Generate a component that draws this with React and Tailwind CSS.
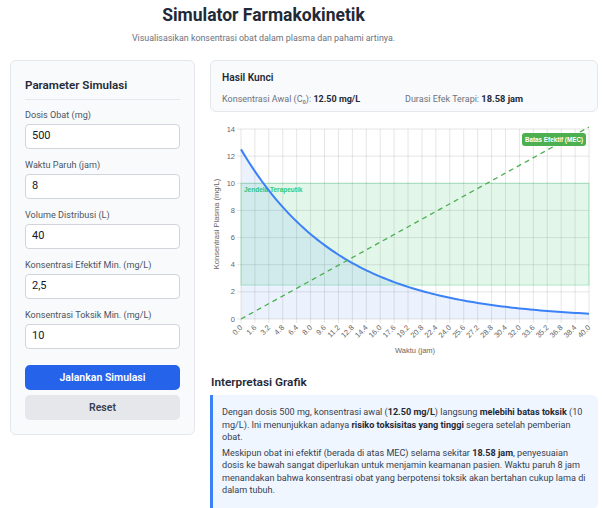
import React from "react";

const PL = 31, PR = 379, PT = 11, PB = 201;
const xs = (t) => PL + (t * (PR - PL)) / 40;
const ys = (c) => PB - (c * (PB - PT)) / 14;

function Chart() {
  const k = Math.log(2) / 8;
  const pts = [];
  for (let i = 0; i <= 100; i++) {
    const t = i * 0.4;
    pts.push([xs(t), ys(12.5 * Math.exp(-k * t))]);
  }
  const line = pts.map((p, i) => (i ? "L" : "M") + p[0].toFixed(2) + " " + p[1].toFixed(2)).join(" ");
  const fill = line + ` L${PR} ${PB} L${PL} ${PB} Z`;
  const xticks = [];
  for (let i = 0; i <= 25; i++) xticks.push(i * 1.6);
  const yticks = [0, 2, 4, 6, 8, 10, 12, 14];
  return (
    <svg width="388" height="244" viewBox="0 0 388 244" style={{ fontFamily: "'Liberation Sans', Arial, sans-serif" }}>
      {xticks.map((t, i) => (
        <line key={"vx" + i} x1={xs(t)} x2={xs(t)} y1={PT} y2={PB + 4} stroke="rgba(0,0,0,0.1)" strokeWidth="1" />
      ))}
      {yticks.map((v, i) => (
        <line key={"hy" + i} x1={PL - 4} x2={PR} y1={ys(v)} y2={ys(v)} stroke="rgba(0,0,0,0.1)" strokeWidth="1" />
      ))}
      <rect x={PL} y={ys(10)} width={PR - PL} height={ys(2.5) - ys(10)} fill="rgba(34,197,94,0.13)" stroke="rgba(34,197,94,0.3)" strokeWidth="1" />
      <text x={PL + 3} y={ys(10) + 9} fontSize="6.5" fontWeight="700" fill="rgb(52,200,105)">Jendela Terapeutik</text>
      <path d={fill} fill="rgba(59,130,246,0.1)" />
      <path d={line} fill="none" stroke="rgb(59,130,246)" strokeWidth="2" />
      <line x1={PL} y1={PB} x2={PR} y2={PT - 2} stroke="rgb(76,175,80)" strokeWidth="1.3" strokeDasharray="5 4" />
      <rect x="312" y="15" width="64" height="13" rx="3" fill="rgb(76,175,80)" />
      <text x="344" y="24.2" fontSize="6.3" fontWeight="700" fill="#fff" textAnchor="middle">Batas Efektif (MEC)</text>
      {yticks.map((v, i) => (
        <text key={"yt" + i} x={PL - 6} y={ys(v) + 2.5} fontSize="7.5" fill="#666" textAnchor="end">{v}</text>
      ))}
      {xticks.map((t, i) => (
        <text key={"xt" + i} x={xs(t) + 2} y={PB + 9} fontSize="7.5" fill="#666" textAnchor="end" transform={`rotate(-45 ${xs(t) + 2} ${PB + 9})`}>{t.toFixed(1)}</text>
      ))}
      <text x="0" y="0" fontSize="7.5" fill="#666" textAnchor="middle" transform={`translate(9 ${(PT + PB) / 2}) rotate(-90)`}>Konsentrasi Plasma (mg/L)</text>
      <text x={(PL + PR) / 2} y="235" fontSize="7.5" fill="#666" textAnchor="middle">Waktu (jam)</text>
    </svg>
  );
}

function Field({ label, value }) {
  return (
    <div className="flex flex-col gap-[3px]">
      <label className="text-[9.1px] leading-[12px] text-[#4b5563]">{label}</label>
      <div className="h-[25px] bg-white border border-[#d1d5db] rounded-[4px] px-[6px] flex items-center text-[11px] text-[#111827]">{value}</div>
    </div>
  );
}

export default function App() {
  return (
    <div className="bg-white w-[602px] min-h-[508px]" style={{ fontFamily: "Roboto, 'Noto Sans', sans-serif" }}>
      <div className="w-[527px] text-center pt-[4px]">
        <h1 className="text-[17.5px] leading-[22px] font-bold text-[#1f2937]">Simulator Farmakokinetik</h1>
        <p className="mt-[6px] text-[8.9px] leading-[12px] text-[#6b7280]">Visualisasikan konsentrasi obat dalam plasma dan pahami artinya.</p>
      </div>
      <div className="grid grid-cols-[185px_388px] gap-[15px] pl-[10px] mt-[16px]">
        <div className="self-start bg-[#f9fafb] border border-[#e5e7eb] rounded-[6px] px-[14px] pt-[16px] pb-[14px]">
          <h2 className="text-[11.6px] leading-[16px] font-semibold text-[#1f2937] pb-[6px] border-b border-[#e5e7eb]">Parameter Simulasi</h2>
          <div className="mt-[9px] flex flex-col gap-[10px]">
            <Field label="Dosis Obat (mg)" value="500" />
            <Field label="Waktu Paruh (jam)" value="8" />
            <Field label="Volume Distribusi (L)" value="40" />
            <Field label="Konsentrasi Efektif Min. (mg/L)" value="2,5" />
            <Field label="Konsentrasi Toksik Min. (mg/L)" value="10" />
          </div>
          <div className="mt-[16px] flex flex-col gap-[5px]">
            <button className="h-[25px] rounded-[5px] bg-[#2563eb] text-white text-[10.5px] font-semibold">Jalankan Simulasi</button>
            <button className="h-[25px] rounded-[5px] bg-[#e5e7eb] text-[#374151] text-[10.5px] font-semibold">Reset</button>
          </div>
        </div>
        <div className="flex flex-col">
          <div className="bg-[#f9fafb] border border-[#e5e7eb] rounded-[6px] h-[52px] px-[11px] pt-[10px]">
            <h3 className="text-[10.2px] leading-[14px] font-semibold text-[#1f2937]">Hasil Kunci</h3>
            <div className="mt-[8px] grid grid-cols-2 text-[9px] leading-[12px] text-[#6b7280]">
              <div>Konsentrasi Awal (C₀): <span className="font-bold text-[#1f2937]">12.50 mg/L</span></div>
              <div className="pl-[1px]">Durasi Efek Terapi: <span className="font-bold text-[#1f2937] text-[9.3px]">18.58 jam</span></div>
            </div>
          </div>
          <div className="mt-[6px]">
            <Chart />
          </div>
          <h3 className="mt-[12px] text-[11.8px] leading-[16px] font-semibold text-[#1f2937] pl-[1px]">Interpretasi Grafik</h3>
          <div className="mt-[5px] bg-[#eff6ff] border-l-[3px] border-[#3b82f6] rounded-r-[6px] pl-[9px] pr-[8px] pt-[11px] pb-[12px] text-[9.1px] leading-[12.5px] text-[#374151] flex flex-col gap-[3px]">
            <p>Dengan dosis 500 mg, konsentrasi awal (<b className="text-[#1f2937]">12.50 mg/L</b>) langsung <b className="text-[#1f2937]">melebihi batas toksik</b> (10 mg/L). Ini menunjukkan adanya <b className="text-[#1f2937]">risiko toksisitas yang tinggi</b> segera setelah pemberian obat.</p>
            <p>Meskipun obat ini efektif (berada di atas MEC) selama sekitar <b className="text-[#1f2937]">18.58 jam</b>, penyesuaian dosis ke bawah sangat diperlukan untuk menjamin keamanan pasien. Waktu paruh 8 jam menandakan bahwa konsentrasi obat yang berpotensi toksik akan bertahan cukup lama di dalam tubuh.</p>
          </div>
        </div>
      </div>
    </div>
  );
}
